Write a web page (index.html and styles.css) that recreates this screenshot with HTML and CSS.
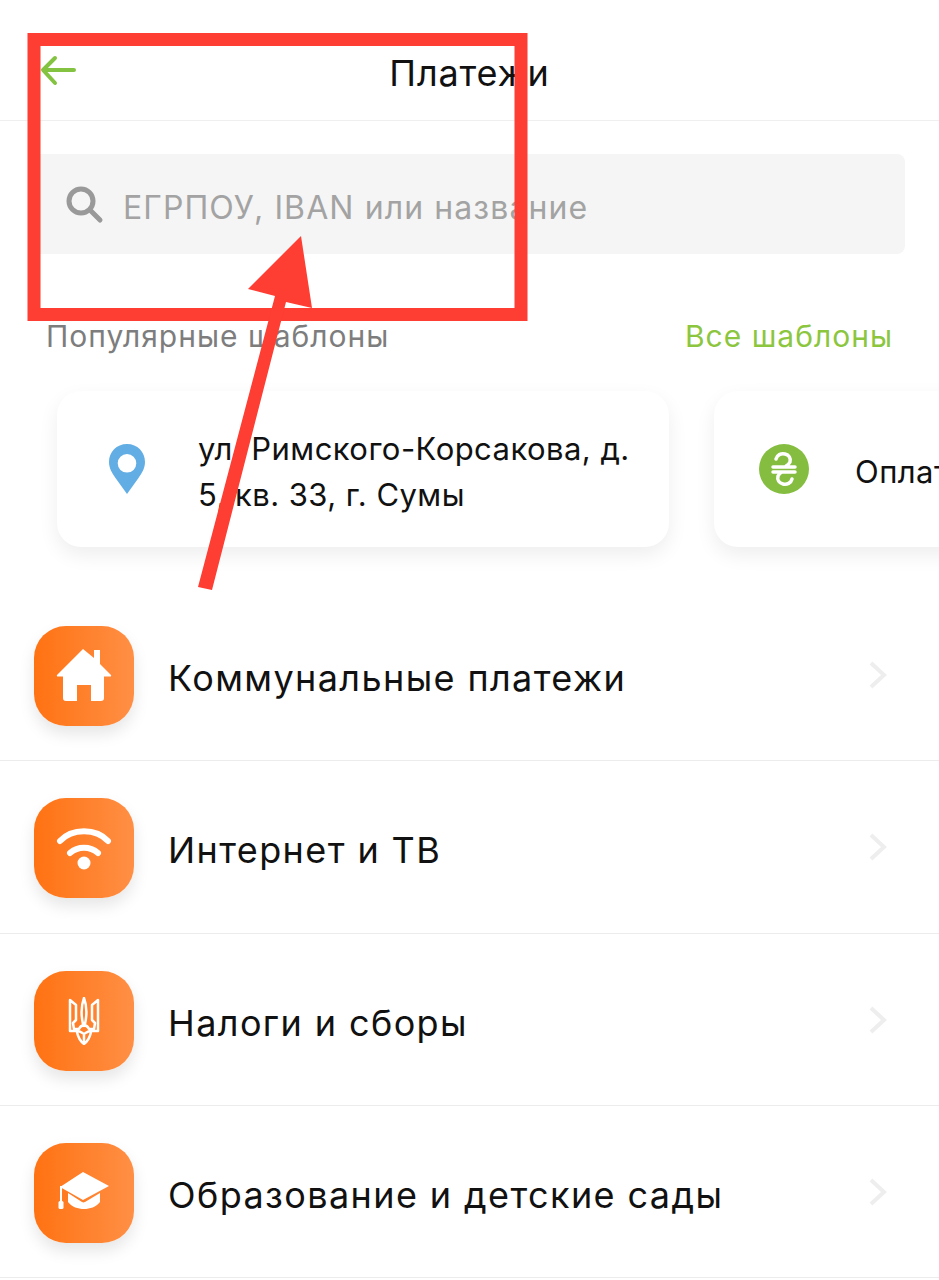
FILE: index.html
```html
<!DOCTYPE html>
<html lang="ru">

<head>
    <meta charset="utf-8">
    <meta name="viewport" content="width=device-width, initial-scale=1.0">
    <title>Платежи</title>
    <link rel="stylesheet" href="styles.css">
</head>

<body>
    <main class="page">
        <header class="topbar">
            <svg class="back" width="38" height="34" viewBox="0 0 38 34">
                <path d="M35 15H5M16 3L4 15l12 13" fill="none" stroke="#84c341" stroke-width="4" stroke-linecap="round" stroke-linejoin="round" />
            </svg>
            <h1>Платежи</h1>
        </header>

        <div class="search">
            <svg width="38" height="38" viewBox="0 0 38 38">
                <circle cx="15" cy="15" r="12" fill="none" stroke="#999" stroke-width="5" />
                <path d="M24 24l10 10" stroke="#999" stroke-width="5" stroke-linecap="round" />
            </svg>
            <span>ЕГРПОУ, IBAN или название</span>
        </div>

        <div class="section-head">
            <span>Популярные шаблоны</span>
            <a class="all">Все шаблоны</a>
        </div>

        <section class="templates">
            <article class="card card-address">
                <svg width="38" height="50" viewBox="0 0 38 50">
                    <path fill-rule="evenodd" fill="#62aee4" d="M19 0C8.500 0 1 8 1 18c0 6 3 11 6.500 16L19 50l11.500-16C34 29 37 24 37 18 37 8 29.500 0 19 0zm0 10a9.300 9.300 0 1 1 0 18.600A9.300 9.300 0 0 1 19 10z" />
                </svg>
                <p>ул. Римского-Корсакова, д. 5, кв. 33, г. Сумы</p>
            </article>
            <article class="card card-pay">
                <svg width="50" height="50" viewBox="0 0 50 50">
                    <circle cx="25" cy="25" r="25" fill="#84bd3f" />
                    <path d="M17 15c1-4 5-6 9-5 4 1 6 4 5 8-1 2-2 3-4 4M33 35c-1 4-5 6-9 5-4-1-6-4-5-8 1-2 2-3 4-4M14 23h22M14 28h22" fill="none" stroke="#fff" stroke-width="3.500" stroke-linecap="round" />
                </svg>
                <p>Оплата услуг</p>
            </article>
        </section>

        <ul class="list">
            <li>
                <div class="tile">
                    <svg width="56" height="56" viewBox="0 0 56 56">
                        <path fill="#fff" d="M27 1L38 10V2h6v14l11 11c.5 1 0 1.500-1 1.500h-6V50c0 2-1 3-3 3H35V37H21v16H10c-2 0-3-1-3-3V28.500H2c-1 0-1.500-.5-1-1.500z" />
                    </svg>
                </div>
                <span>Коммунальные платежи</span>
                <svg class="chevron" width="20" height="30" viewBox="0 0 20 30"><path d="M3 3l13 12L3 27" fill="none" stroke="#eee" stroke-width="4" /></svg>
            </li>
            <li>
                <div class="tile">
                    <svg width="56" height="50" viewBox="0 0 56 50">
                        <path d="M4 18C16 5 40 5 52 18M14 30C22 23 34 23 42 30" fill="none" stroke="#fff" stroke-width="6" stroke-linecap="round" />
                        <circle cx="28" cy="40" r="6.500" fill="#fff" />
                    </svg>
                </div>
                <span>Интернет и ТВ</span>
                <svg class="chevron" width="20" height="30" viewBox="0 0 20 30"><path d="M3 3l13 12L3 27" fill="none" stroke="#eee" stroke-width="4" /></svg>
            </li>
            <li>
                <div class="tile">
                    <svg width="32" height="48" viewBox="0 0 32 48">
                        <path d="M16 1c-3 8-3 17-1 26h2c2-9 2-18-1-26zM2 3l6 5v15l-3 3 1 6h5c1-2 3-4 5-3 2-1 4 1 5 3h5l1-6-3-3V8l6-5v31h-8c-2 0-4 2-6 3-2-1-4-3-6-3H2zM16 37v9M9 35c1 5 3 9 7 12 4-3 6-7 7-12" fill="none" stroke="#fff" stroke-width="2.500" stroke-linejoin="round" />
                    </svg>
                </div>
                <span>Налоги и сборы</span>
                <svg class="chevron" width="20" height="30" viewBox="0 0 20 30"><path d="M3 3l13 12L3 27" fill="none" stroke="#eee" stroke-width="4" /></svg>
            </li>
            <li>
                <div class="tile">
                    <svg width="54" height="44" viewBox="0 0 54 44">
                        <path fill="#fff" d="M26 1L52 15 26 29 3 16zM11 22l14 9c1 .5 2 .5 3 0l15-9v9c-4 5-10 7-16 7s-12-2-16-7z" />
                        <path d="M4 15v16" stroke="#fff" stroke-width="2" />
                        <rect x="1.500" y="30" width="5" height="8" rx="1.500" fill="#fff" />
                    </svg>
                </div>
                <span>Образование и детские сады</span>
                <svg class="chevron" width="20" height="30" viewBox="0 0 20 30"><path d="M3 3l13 12L3 27" fill="none" stroke="#eee" stroke-width="4" /></svg>
            </li>
        </ul>

        <!-- пометки поверх скриншота -->
        <svg class="marks" width="939" height="1280" viewBox="0 0 939 1280">
            <rect x="34" y="39.500" width="487" height="275" fill="none" stroke="#fe3d33" stroke-width="13" />
            <path fill="#fe3d33" d="M301 236L312 308 286 302 212 590 198 587 275 296 248 289z" />
        </svg>
    </main>
</body></html>
```

FILE: styles.css
```css
html,
body {
    margin: 0;
    background: #fff;
}

body {
    font-family: Inter, "Noto Sans", sans-serif;
    color: #111;
}

.page {
    position: relative;
    width: 939px;
    height: 1280px;
    overflow: hidden;
}

.topbar {
    box-sizing: border-box;
    height: 121px;
    padding: 26px 0 0 39px;
    display: grid;
    grid-template-columns: 1fr auto 1fr;
    align-items: center;
    border-bottom: 1px solid #efefef;
}

.back {
    margin-top: -2px;
}

.topbar h1 {
    margin: 0;
    margin-left: -39px;
    font-size: 36px;
    font-weight: 400;
    letter-spacing: 0.85px;
    color: #111;
}

.search {
    box-sizing: border-box;
    height: 100px;
    margin: 33px 34px 0;
    padding: 7px 0 0 32px;
    display: flex;
    align-items: center;
    gap: 19px;
    background: #f5f5f5;
    border-radius: 8px;
    color: #a3a3a3;
    font-size: 32px;
    letter-spacing: 1.1px;
}

.search svg {
    margin-top: -6px;
}

.section-head {
    margin: 64px 46px 0;
    display: flex;
    justify-content: space-between;
    font-size: 30px;
    line-height: 36px;
    letter-spacing: 1px;
    color: #7d7d7d;
}

.all {
    color: #8cc63f;
}

.templates {
    margin-top: 37px;
    padding-left: 57px;
    display: flex;
    gap: 45px;
}

.card {
    box-sizing: border-box;
    flex: none;
    height: 156px;
    display: flex;
    align-items: center;
    background: #fff;
    border-radius: 24px;
    box-shadow: 0 8px 20px rgba(0, 0, 0, 0.07);
}

.card p {
    margin: 0;
    padding-top: 6px;
    font-size: 31px;
    line-height: 46px;
    letter-spacing: 0.45px;
}

.card-address {
    width: 612px;
    padding-left: 51px;
    gap: 52px;
}

.card-address p {
    width: 440px;
}

.card-pay {
    width: 500px;
    padding-left: 45px;
    gap: 46px;
    white-space: nowrap;
}

.list {
    list-style: none;
    margin: 42px 0 0;
    padding: 0;
}

.list li {
    box-sizing: border-box;
    height: 172.250px;
    padding: 37px 51px 0 34px;
    display: flex;
    align-items: flex-start;
    border-bottom: 1px solid #ececec;
}

.list li span {
    flex: 1;
    margin-left: 34px;
    font-size: 36px;
    line-height: 104px;
    letter-spacing: 1.4px;
}

.tile {
    width: 100px;
    height: 100px;
    display: flex;
    align-items: center;
    justify-content: center;
    border-radius: 32px;
    background: linear-gradient(90deg, #ff7212, #ff8f45);
    box-shadow: 0 8px 16px rgba(0, 0, 0, 0.1);
}

.chevron {
    margin-top: 34px;
}

.marks {
    position: absolute;
    left: 0;
    top: 0;
}
```
